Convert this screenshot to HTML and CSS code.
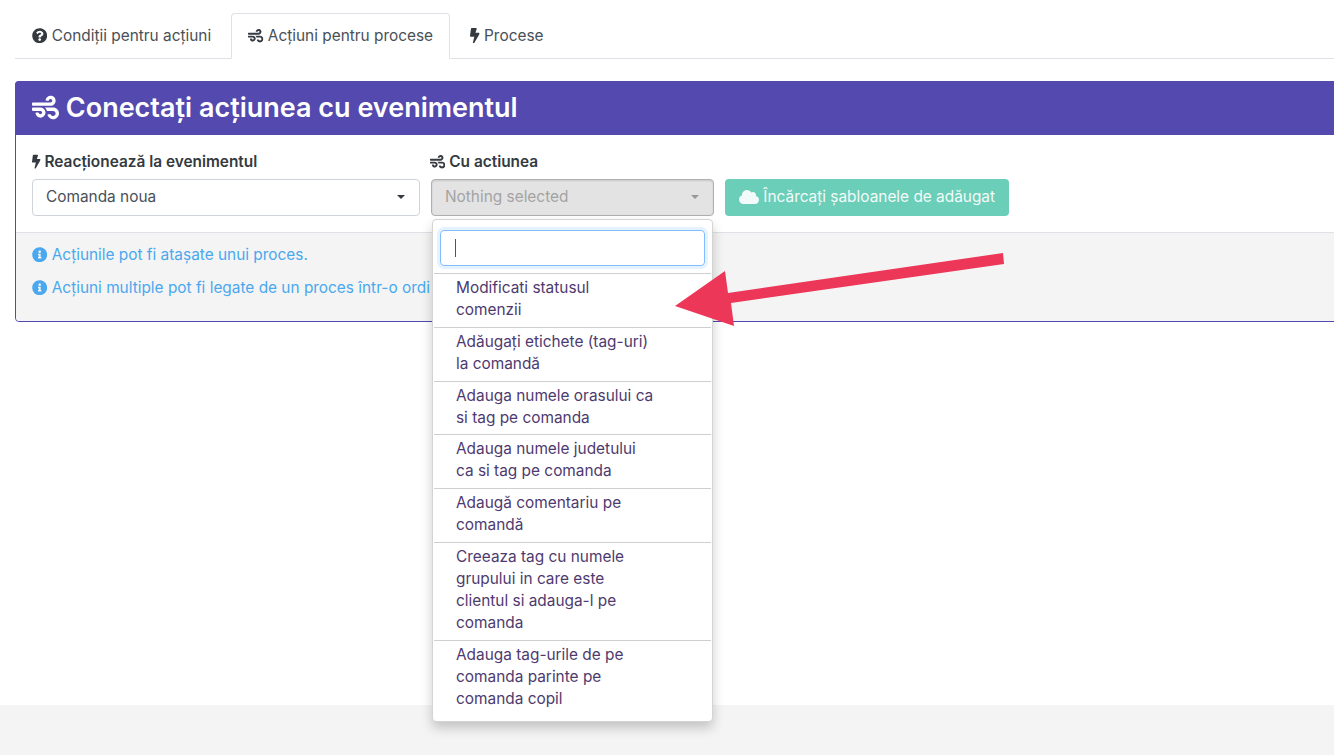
FILE: index.html
```html
<!DOCTYPE html>
<html lang="ro">
<head>
<meta charset="utf-8">
<title>Acțiuni pentru procese</title>
<link rel="stylesheet" href="styles.css">
</head>
<body>
<svg class="defs" aria-hidden="true">
  <symbol id="wind" viewBox="0 0 512 512"><path d="M156.7 256H16c-8.8 0-16 7.2-16 16v32c0 8.8 7.2 16 16 16h142.2c15.9 0 30.8 10.9 33.4 26.6 3.3 20-12.1 37.4-31.6 37.4-14.1 0-26.1-9.2-30.4-21.9-2.1-6.3-8.6-10.1-15.2-10.1H81.6c-9.8 0-17.7 8.8-15.9 18.4 8.6 44.1 47.6 77.6 94.2 77.6 57.1 0 102.7-50.1 95.2-108.6C249 291 205.4 256 156.7 256zM16 224h336c59.7 0 106.8-54.8 93.8-116.7-7.6-36.2-36.9-65.5-73.1-73.1-55.4-11.6-105.1 24.9-114.9 75.5-1.9 9.6 6.1 18.3 15.8 18.3h32.8c6.7 0 13.1-3.8 15.2-10.1C325.9 105.2 337.9 96 352 96c19.4 0 34.9 17.4 31.6 37.4-2.6 15.7-17.4 26.6-33.4 26.6H16c-8.8 0-16 7.2-16 16v32c0 8.8 7.2 16 16 16zm384 32H243.5c19.3 16.6 33.2 38.8 39.8 64H400c26.5 0 48 21.5 48 48s-21.5 48-48 48c-17.9 0-33.3-9.9-41.6-24.4-2.9-5-8.7-7.6-14.5-7.6h-33.8c-10.9 0-19 10.8-15.3 21.1 17.8 50.6 70.5 84.8 129.4 72.3 41.2-8.7 75.1-41.6 84.7-82.7C526 321.5 470.5 256 400 256z"/></symbol>
  <symbol id="bolt" viewBox="0 0 320 512"><path d="M296 160H180.6l42.6-129.8C227.2 15 215.7 0 200 0H56C44 0 33.8 8.9 32.2 20.8l-32 240C-1.7 275.2 9.5 288 24 288h118.7L96.6 482.5c-3.6 15.2 8 29.5 23.3 29.5 8.4 0 16.4-4.4 20.8-12l176-304c9.3-15.9-2.2-36-20.7-36z"/></symbol>
  <symbol id="question" viewBox="0 0 512 512"><path d="M504 256c0 136.997-111.043 248-248 248S8 392.997 8 256C8 119.083 119.043 8 256 8s248 111.083 248 248zM262.655 90c-54.497 0-89.255 22.957-116.549 63.758-3.536 5.286-2.353 12.415 2.715 16.258l34.699 26.31c5.205 3.947 12.621 3.008 16.665-2.122 17.864-22.658 30.113-35.797 57.303-35.797 20.429 0 45.698 13.148 45.698 32.958 0 14.976-12.363 22.667-32.534 33.976C247.128 238.528 216 254.941 216 296v4c0 6.627 5.373 12 12 12h56c6.627 0 12-5.373 12-12v-1.333c0-28.462 83.186-29.647 83.186-106.667 0-58.002-60.165-102-116.531-102zM256 338c-25.365 0-46 20.635-46 46 0 25.364 20.635 46 46 46s46-20.636 46-46c0-25.365-20.635-46-46-46z"/></symbol>
  <symbol id="info" viewBox="0 0 512 512"><path d="M256 8C119.043 8 8 119.083 8 256c0 136.997 111.043 248 248 248s248-111.003 248-248C504 119.083 392.957 8 256 8zm0 110c23.196 0 42 18.804 42 42s-18.804 42-42 42-42-18.804-42-42 18.804-42 42-42zm56 254c0 6.627-5.373 12-12 12h-88c-6.627 0-12-5.373-12-12v-24c0-6.627 5.373-12 12-12h12v-64h-12c-6.627 0-12-5.373-12-12v-24c0-6.627 5.373-12 12-12h64c6.627 0 12 5.373 12 12v100h12c6.627 0 12 5.373 12 12v24z"/></symbol>
  <symbol id="cloud" viewBox="0 0 640 512"><path d="M537.6 226.6c4.1-10.7 6.4-22.4 6.4-34.6 0-53-43-96-96-96-19.7 0-38.1 6-53.3 16.2C367 64.2 315.3 32 256 32c-88.4 0-160 71.6-160 160 0 2.7.1 5.4.2 8.1C40.2 219.8 0 273.2 0 336c0 79.5 64.5 144 144 144h368c70.7 0 128-57.3 128-128 0-61.9-44-113.6-102.4-125.4z"/></symbol>
</svg>

<main class="page">
  <nav class="tabs">
    <a class="tab"><svg class="icon"><use href="#question"/></svg> Condiții pentru acțiuni</a>
    <a class="tab active"><svg class="icon"><use href="#wind"/></svg> Acțiuni pentru procese</a>
    <a class="tab"><svg class="icon bolt-tab"><use href="#bolt"/></svg> Procese</a>
  </nav>

  <section class="panel">
    <h2 class="panel-title"><svg class="icon"><use href="#wind"/></svg> Conectați acțiunea cu evenimentul</h2>
    <div class="panel-body">
      <div class="field field-event">
        <label class="label"><svg class="icon bolt"><use href="#bolt"/></svg> Reacționează la evenimentul</label>
        <div class="select">Comanda noua<span class="caret"></span></div>
      </div>
      <div class="field field-action">
        <label class="label"><svg class="icon wind-label"><use href="#wind"/></svg> Cu actiunea</label>
        <div class="select disabled">Nothing selected<span class="caret"></span></div>
        <div class="menu">
          <div class="search"><span class="cursor"></span></div>
          <ul class="options">
            <li>Modificati statusul comenzii</li>
            <li>Adăugați etichete (tag-uri) la comandă</li>
            <li>Adauga numele orasului ca si tag pe comanda</li>
            <li>Adauga numele judetului ca si tag pe comanda</li>
            <li>Adaugă comentariu pe comandă</li>
            <li>Creeaza tag cu numele grupului in care este clientul si adauga-l pe comanda</li>
            <li>Adauga tag-urile de pe comanda parinte pe comanda copil</li>
          </ul>
        </div>
      </div>
      <button class="upload" type="button"><svg class="icon cloud"><use href="#cloud"/></svg> Încărcați șabloanele de adăugat</button>
    </div>
    <div class="panel-foot">
      <p class="hint"><svg class="icon"><use href="#info"/></svg> Acțiunile pot fi atașate unui proces.</p>
      <p class="hint hint-long"><svg class="icon"><use href="#info"/></svg> Acțiuni multiple pot fi legate de un proces într-o ordi</p>
    </div>
  </section>
</main>
<footer class="page-foot"></footer>

<svg class="arrow" viewBox="0 0 1334 755" aria-hidden="true">
  <polygon points="1003,253 1004,264 731,303 734,326 675,306 725,271 728,293"/>
</svg>
</body>
</html>
```

FILE: styles.css
```css
* { box-sizing: border-box; }
html, body { margin: 0; height: 100%; overflow: hidden; }
body {
  position: relative;
  background: #fff;
  color: #343a40;
  font: 15.4px/22px Inter, "Liberation Sans", sans-serif;
  display: flex;
  flex-direction: column;
}
.defs { display: none; }
.icon { width: 1em; height: 1em; fill: currentColor; vertical-align: -2px; }
.icon.bolt { width: .56em; }
.icon.bolt-tab { width: .625em; }
.icon.wind-label { margin-left: -1px; }
.icon.cloud { width: 20px; height: 16px; vertical-align: -3px; }

.page { height: 705px; padding: 13px 0 0 15px; }

.tabs { display: flex; gap: 3px; height: 46px; border-bottom: 1px solid #dee2e6; }
.tab {
  height: 46px;
  padding: 11px 16px;
  color: #495057;
  border: 1px solid transparent;
  border-radius: 4px 4px 0 0;
  white-space: nowrap;
}
.tab .icon { color: #343a40; }
.tab.active { background: #fff; border-color: #dee2e6 #dee2e6 #fff; }

.panel {
  margin: 22px -30px 0 0;
  height: 241px;
  border: 1px solid #5349ae;
  border-radius: 4px;
}
.panel-title {
  margin: -1px -1px 0;
  height: 54px;
  padding: 0 17px;
  background: #5349ae;
  color: #fff;
  font-size: 27px;
  font-weight: 600;
  line-height: 54px;
  border-radius: 4px 4px 0 0;
}
.panel-title .icon { vertical-align: -4px; }

.panel-body {
  display: flex;
  align-items: flex-end;
  gap: 11px;
  height: 98px;
  padding: 0 16px 16px;
  border-bottom: 1px solid #dee2e6;
}
.field { position: relative; }
.field-event { width: 388px; }
.field-action { width: 283px; }
.label { display: block; margin-bottom: 6px; font-weight: 600; line-height: 22px; color: #343a40; }
.select {
  position: relative;
  height: 37px;
  padding: 6px 13px;
  border: 1px solid #ced4da;
  border-radius: 4px;
  background: #fff;
  color: #495057;
}
.select.disabled {
  background: #e3e3e3;
  border-color: #b0b0b0;
  box-shadow: inset 0 1px 2px rgba(0, 0, 0, .12);
  color: #a3a3a3;
}
.caret {
  position: absolute;
  right: 14px;
  top: 15px;
  border: 4px solid transparent;
  border-top-color: #343a40;
  border-bottom-width: 0;
}
.select.disabled .caret { border-top-color: #999; }

.upload {
  height: 37px;
  width: 284px;
  padding: 0 14px 2px;
  border: 0;
  border-radius: 4px;
  background: #6bceb8;
  color: #f2fbf9;
  font: inherit;
  text-align: left;
  white-space: nowrap;
}

.panel-foot { height: 88px; padding: 11px 16px 0; background: #f4f4f4; border-radius: 0 0 4px 4px; }
.hint { margin: 0 0 11px; color: #4aa8ee; white-space: nowrap; }

.menu {
  position: absolute;
  top: 68px;
  left: 1px;
  width: 281px;
  height: 503px;
  background: #fff;
  border: 1px solid #d4d4d4;
  border-radius: 4px;
  box-shadow: 0 6px 12px rgba(0, 0, 0, .2);
  z-index: 2;
}
.search {
  height: 36px;
  margin: 10px 7px 7px;
  padding: 8px 14px;
  border: 1px solid #80bdff;
  border-radius: 4px;
  box-shadow: 0 0 0 3px rgba(0, 123, 255, .1);
}
.cursor { display: block; width: 1px; height: 18px; background: #555; }
.options { list-style: none; margin: 0; padding: 0; }
.options li {
  margin: 0 1px;
  padding: 3px 55px 5.8px 22px;
  border-top: 1px solid #cfcfcf;
  color: #4e3a6e;
}

.page-foot { height: 50px; background: #f4f4f4; }

.arrow { position: absolute; left: 0; top: 0; width: 1334px; height: 755px; z-index: 3; pointer-events: none; }
.arrow polygon { fill: #ec3759; }
```
